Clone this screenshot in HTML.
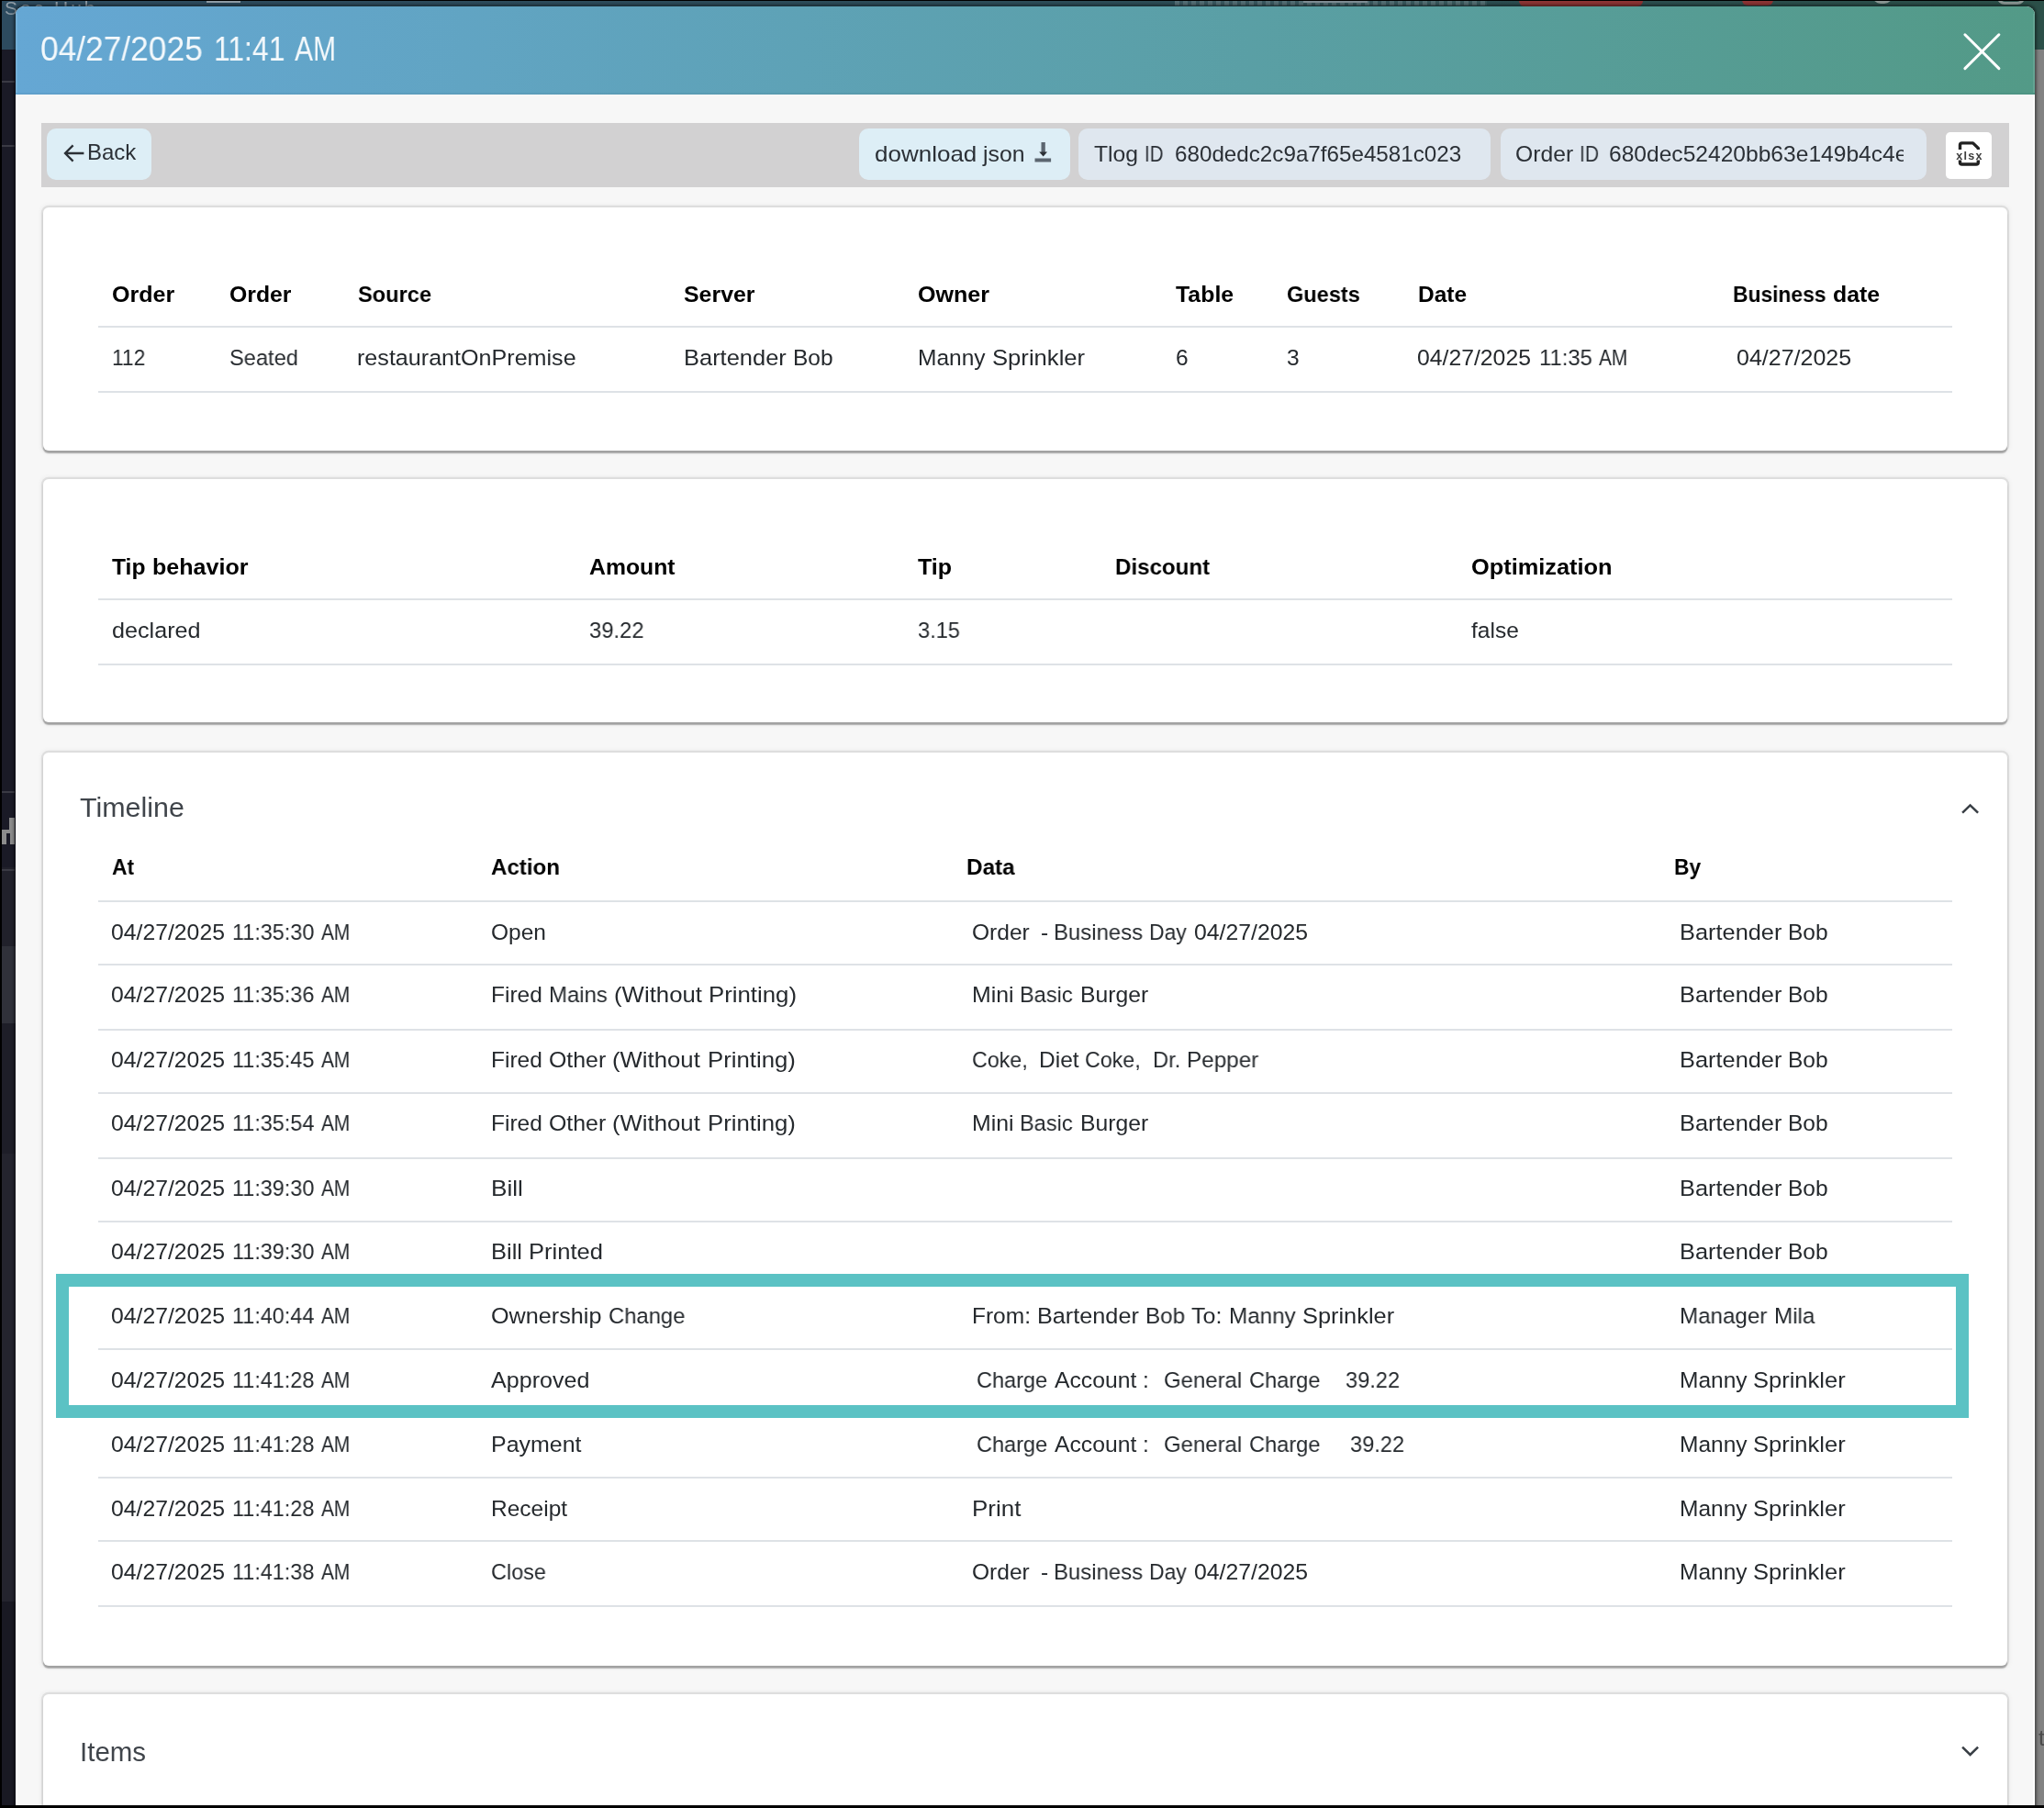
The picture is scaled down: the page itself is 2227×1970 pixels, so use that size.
<!DOCTYPE html>
<html><head><meta charset="utf-8"><title>Order timeline</title>
<style>
html,body{margin:0;padding:0;}
html,body{width:2227px;height:1970px;overflow:hidden;}
body{position:relative;background:#828282;font-family:"Liberation Sans",sans-serif;}
#root{position:absolute;left:0;top:0;width:2227px;height:1970px;overflow:hidden;background:#828282;}
.b{position:absolute;display:block;}
.t{position:absolute;display:block;white-space:pre;line-height:40px;height:40px;will-change:transform;transform-origin:0 50%;}
svg.b{will-change:transform;}
</style></head><body><div id="root">
<div class="b" style="left:0.00px;top:0.00px;width:2227.00px;height:54.00px;background:linear-gradient(90deg,#2d4b5f 0%,#2c4c58 50%,#2b4f48 100%);"></div>
<div class="b" style="left:0.00px;top:54.00px;width:20.00px;height:891.00px;background:#1a1a26;"></div>
<div class="b" style="left:0.00px;top:945.00px;width:20.00px;height:86.00px;background:#21212b;"></div>
<div class="b" style="left:0.00px;top:1031.00px;width:20.00px;height:84.00px;background:#30313a;"></div>
<div class="b" style="left:0.00px;top:1115.00px;width:20.00px;height:142.00px;background:#1e1e28;"></div>
<div class="b" style="left:0.00px;top:1257.00px;width:20.00px;height:488.00px;background:#24242e;"></div>
<div class="b" style="left:0.00px;top:1745.00px;width:20.00px;height:225.00px;background:#191923;"></div>
<div class="b" style="left:2.00px;top:88.00px;width:14.00px;height:1.50px;background:#3a3a44;"></div>
<div class="b" style="left:2.00px;top:158.00px;width:14.00px;height:1.50px;background:#3a3a44;"></div>
<div class="b" style="left:2.00px;top:862.00px;width:14.00px;height:1.50px;background:#3a3a44;"></div>
<div class="b" style="left:2.00px;top:947.00px;width:14.00px;height:1.50px;background:#3a3a44;"></div>
<div class="b" style="left:10.00px;top:891.00px;width:6.00px;height:13.00px;background:#8c8c8c;"></div>
<div class="b" style="left:2.00px;top:904.00px;width:14.00px;height:4.00px;background:#8c8c8c;"></div>
<div class="b" style="left:2.00px;top:908.00px;width:5.00px;height:12.00px;background:#8c8c8c;"></div>
<div class="b" style="left:11.00px;top:908.00px;width:5.00px;height:12.00px;background:#8c8c8c;"></div>
<span class="t" style="left:4.5px;top:-11.5px;font-size:21px;color:#8e9ba5;letter-spacing:3px;">Sec Hub</span>
<div class="b" style="left:1655.00px;top:-6.00px;width:135.00px;height:12.50px;background:#8c3434;border-radius:6px;"></div>
<div class="b" style="left:1898.00px;top:-6.00px;width:34.00px;height:12.00px;background:#8c3434;border-radius:6px;"></div>
<div class="b" style="left:1280.00px;top:1.00px;width:340.00px;height:4.50px;background:repeating-linear-gradient(90deg,rgba(150,165,170,.38) 0 5px,rgba(150,165,170,.12) 5px 9px);"></div>
<div class="b" style="left:1420.00px;top:1.00px;width:70.00px;height:2.00px;background:#7e8c93;"></div>
<div class="b" style="left:225.00px;top:1.00px;width:37.00px;height:1.60px;background:#8e9ba5;"></div>
<div class="b" style="left:2040px;top:-14px;width:22px;height:18px;border:3px solid #8a9693;border-radius:11px;box-sizing:border-box"></div>
<div class="b" style="left:2176px;top:-14px;width:30px;height:19px;border:3px solid #8a9693;border-radius:8px;box-sizing:border-box"></div>
<div class="b" style="left:2210.00px;top:54.00px;width:17.00px;height:1916.00px;background:#828282;"></div>
<div class="b" style="left:0.00px;top:0.00px;width:2.00px;height:1970.00px;background:#000;"></div>
<div class="b" style="left:0.00px;top:0.00px;width:2227.00px;height:1.00px;background:#000;"></div>
<div class="b" style="left:16.50px;top:6.80px;width:2200.60px;height:1983.20px;background:#f7f7f7;border-radius:9px;box-shadow:0 0 3px 1.5px rgba(0,0,0,.42);"></div>
<div class="b" style="left:16.50px;top:6.80px;width:2200.60px;height:96.50px;background:linear-gradient(90deg,#65a7d4 0%,#539a87 100%);border-radius:9px 9px 0 0;"></div>
<span class="t" style="left:44.20px;top:34.00px;font-size:36px;font-weight:400;color:rgba(255,255,255,.93);transform:scaleX(0.9809);">04/27/2025</span>
<span class="t" style="left:232.50px;top:34.00px;font-size:36px;font-weight:400;color:rgba(255,255,255,.93);transform:scaleX(0.8857);">11:41</span>
<span class="t" style="left:320.50px;top:34.00px;font-size:36px;font-weight:400;color:rgba(255,255,255,.93);transform:scaleX(0.8352);">AM</span>
<div class="b" style="left:16.50px;top:103.00px;width:2.30px;height:1887.00px;background:#fff;"></div>
<div class="b" style="left:2214.80px;top:103.00px;width:2.30px;height:1887.00px;background:#fff;"></div>
<div class="b" style="left:16.50px;top:14.80px;width:2.30px;height:86.20px;background:rgba(255,255,255,.10);"></div>
<div class="b" style="left:2214.80px;top:14.80px;width:2.30px;height:86.20px;background:rgba(255,255,255,.10);"></div>
<div class="b" style="left:16.50px;top:101.30px;width:2200.60px;height:2.00px;background:rgba(0,40,60,.05);"></div>
<svg class="b" style="left:2138px;top:35px" width="43" height="43" viewBox="0 0 43 43"><path d="M2.9 2.8 L39.9 39.6 M39.9 2.8 L2.9 39.6" stroke="#fff" stroke-width="3" stroke-linecap="round" fill="none"/></svg>
<div class="b" style="left:44.50px;top:134.00px;width:2144.50px;height:70.00px;background:#d2d1d2;"></div>
<div class="b" style="left:51.00px;top:140.00px;width:114.00px;height:55.50px;background:#ddeef6;border-radius:10px;"></div>
<div class="b" style="left:936.00px;top:140.00px;width:230.00px;height:55.50px;background:#ddeef6;border-radius:10px;"></div>
<div class="b" style="left:1174.50px;top:140.00px;width:449.50px;height:55.50px;background:#dfe7ef;border-radius:10px;"></div>
<div class="b" style="left:1635.00px;top:140.00px;width:463.50px;height:55.50px;background:#dfe7ef;border-radius:10px;"></div>
<div class="b" style="left:2120.30px;top:143.80px;width:49.70px;height:51.10px;background:#fff;border-radius:5px;"></div>
<svg class="b" style="left:67px;top:155px" width="28" height="24" viewBox="0 0 28 24"><path d="M24.4 12 H4.6 M12.6 3.4 L4 12 L12.6 20.6" stroke="#2b3036" stroke-width="2.3" fill="none" stroke-linecap="butt" stroke-linejoin="miter"/></svg>
<span class="t" style="left:95.20px;top:145.60px;font-size:24px;font-weight:400;color:#2b3036;transform:scaleX(0.9981);">Back</span>
<span class="t" style="left:952.50px;top:147.80px;font-size:24px;font-weight:400;color:#2b3036;transform:scaleX(1.0832);">download</span>
<span class="t" style="left:1070.77px;top:147.80px;font-size:24px;font-weight:400;color:#2b3036;transform:scaleX(1.0324);">json</span>
<svg class="b" style="left:1120px;top:150px" width="32" height="32" viewBox="0 0 32 32"><rect x="14.5" y="5" width="4.3" height="12" fill="#5c6670"/><polygon points="12.2,15.5 21.1,15.5 16.65,20.4" fill="#2b3035"/><rect x="7.5" y="22.5" width="17.6" height="4" fill="#5c6670"/></svg>
<span class="t" style="left:1191.70px;top:147.80px;font-size:24px;font-weight:400;color:#2b3036;transform:scaleX(1.0289);">Tlog</span>
<span class="t" style="left:1247.40px;top:147.80px;font-size:24px;font-weight:400;color:#2b3036;transform:scaleX(0.8500);">ID</span>
<span class="t" style="left:1279.90px;top:147.80px;font-size:24px;font-weight:400;color:#2b3036;transform:scaleX(1.0084);">680dedc2c9a7f65e4581c023</span>
<span class="t" style="left:1651.00px;top:147.80px;font-size:24px;font-weight:400;color:#2b3036;transform:scaleX(1.0286);">Order</span>
<span class="t" style="left:1721.00px;top:147.80px;font-size:24px;font-weight:400;color:#2b3036;transform:scaleX(0.8750);">ID</span>
<div class="b" style="left:1745px;top:140px;width:329.3px;height:55px;overflow:hidden">
<span class="t" style="left:7.80px;top:7.80px;font-size:24px;font-weight:400;color:#2b3036;transform:scaleX(1.0244);">680dec52420bb63e149b4c4e</span>
</div>
<svg class="b" style="left:2125px;top:148px" width="42" height="40" viewBox="0 0 42 40"><path d="M10.5 15 V10 Q10.5 7.9 12.6 7.9 H24.6 L30.3 13.4 V15" stroke="#222" stroke-width="3.4" fill="none" stroke-linejoin="round"/><path d="M10.5 26.6 V28.9 Q10.5 31 12.6 31 H28.2 Q30.3 31 30.3 28.9 V26.6" stroke="#222" stroke-width="3.4" fill="none"/><text x="20.9" y="25.7" font-family="Liberation Sans, sans-serif" font-weight="700" font-size="12.6" text-anchor="middle" fill="#3c3c3c" letter-spacing="1.25">xlsx</text></svg>
<div class="b" style="left:46.80px;top:226.00px;width:2139.90px;height:264.50px;background:#fff;border-radius:6px;box-shadow:0 2.9px 1.3px -0.3px rgba(0,0,0,.27),0 0 0 2.2px rgba(0,0,0,.075),0 0 5px 2.5px rgba(0,0,0,.04);"></div>
<span class="t" style="left:121.75px;top:300.80px;font-size:24.5px;font-weight:700;color:#000;transform:scaleX(1.0225);">Order</span>
<span class="t" style="left:250.00px;top:300.80px;font-size:24.5px;font-weight:700;color:#000;transform:scaleX(1.0112);">Order</span>
<span class="t" style="left:389.50px;top:300.80px;font-size:24.5px;font-weight:700;color:#000;transform:scaleX(0.9639);">Source</span>
<span class="t" style="left:745.00px;top:300.80px;font-size:24.5px;font-weight:700;color:#000;transform:scaleX(1.0164);">Server</span>
<span class="t" style="left:1000.00px;top:300.80px;font-size:24.5px;font-weight:700;color:#000;transform:scaleX(1.0230);">Owner</span>
<span class="t" style="left:1280.50px;top:300.80px;font-size:24.5px;font-weight:700;color:#000;transform:scaleX(1.0161);">Table</span>
<span class="t" style="left:1402.00px;top:300.80px;font-size:24.5px;font-weight:700;color:#000;transform:scaleX(0.9602);">Guests</span>
<span class="t" style="left:1545.00px;top:300.80px;font-size:24.5px;font-weight:700;color:#000;transform:scaleX(1.0000);">Date</span>
<span class="t" style="left:1888.00px;top:300.80px;font-size:24.5px;font-weight:700;color:#000;transform:scaleX(0.9318);">Business</span>
<span class="t" style="left:1997.20px;top:300.80px;font-size:24.5px;font-weight:700;color:#000;transform:scaleX(1.0159);">date</span>
<div class="b" style="left:107.00px;top:355.00px;width:2020.00px;height:2.00px;background:#dee2e6;"></div>
<span class="t" style="left:121.75px;top:369.50px;font-size:24.5px;font-weight:400;color:#25292d;transform:scaleX(0.9295);">112</span>
<span class="t" style="left:250.00px;top:369.50px;font-size:24.5px;font-weight:400;color:#25292d;transform:scaleX(0.9646);">Seated</span>
<span class="t" style="left:389.00px;top:369.50px;font-size:24.5px;font-weight:400;color:#25292d;transform:scaleX(1.0247);">restaurantOnPremise</span>
<span class="t" style="left:745.00px;top:369.50px;font-size:24.5px;font-weight:400;color:#25292d;transform:scaleX(1.0393);">Bartender</span>
<span class="t" style="left:864.12px;top:369.50px;font-size:24.5px;font-weight:400;color:#25292d;transform:scaleX(0.9972);">Bob</span>
<span class="t" style="left:1000.00px;top:369.50px;font-size:24.5px;font-weight:400;color:#25292d;transform:scaleX(0.9985);">Manny</span>
<span class="t" style="left:1080.79px;top:369.50px;font-size:24.5px;font-weight:400;color:#25292d;transform:scaleX(1.0461);">Sprinkler</span>
<span class="t" style="left:1280.50px;top:369.50px;font-size:24.5px;font-weight:400;color:#25292d;transform:scaleX(1.0000);">6</span>
<span class="t" style="left:1402.00px;top:369.50px;font-size:24.5px;font-weight:400;color:#25292d;transform:scaleX(1.0000);">3</span>
<span class="t" style="left:1544.40px;top:369.50px;font-size:24.5px;font-weight:400;color:#25292d;transform:scaleX(1.0106);">04/27/2025</span>
<span class="t" style="left:1676.70px;top:369.50px;font-size:24.5px;font-weight:400;color:#25292d;transform:scaleX(0.9731);">11:35</span>
<span class="t" style="left:1741.70px;top:369.50px;font-size:24.5px;font-weight:400;color:#25292d;transform:scaleX(0.8517);">AM</span>
<span class="t" style="left:1892.00px;top:369.50px;font-size:24.5px;font-weight:400;color:#25292d;transform:scaleX(1.0204);">04/27/2025</span>
<div class="b" style="left:107.00px;top:425.50px;width:2020.00px;height:2.00px;background:#dee2e6;"></div>
<div class="b" style="left:46.80px;top:522.30px;width:2139.90px;height:264.60px;background:#fff;border-radius:6px;box-shadow:0 2.9px 1.3px -0.3px rgba(0,0,0,.27),0 0 0 2.2px rgba(0,0,0,.075),0 0 5px 2.5px rgba(0,0,0,.04);"></div>
<span class="t" style="left:121.50px;top:597.90px;font-size:24.5px;font-weight:700;color:#000;transform:scaleX(1.0050);">Tip</span>
<span class="t" style="left:165.68px;top:597.90px;font-size:24.5px;font-weight:700;color:#000;transform:scaleX(1.0228);">behavior</span>
<span class="t" style="left:641.50px;top:597.90px;font-size:24.5px;font-weight:700;color:#000;transform:scaleX(1.0108);">Amount</span>
<span class="t" style="left:1000.00px;top:597.90px;font-size:24.5px;font-weight:700;color:#000;transform:scaleX(1.0207);">Tip</span>
<span class="t" style="left:1215.00px;top:597.90px;font-size:24.5px;font-weight:700;color:#000;transform:scaleX(0.9833);">Discount</span>
<span class="t" style="left:1602.60px;top:597.90px;font-size:24.5px;font-weight:700;color:#000;transform:scaleX(1.0347);">Optimization</span>
<div class="b" style="left:107.00px;top:652.00px;width:2020.00px;height:2.00px;background:#dee2e6;"></div>
<span class="t" style="left:121.50px;top:666.50px;font-size:24.5px;font-weight:400;color:#25292d;transform:scaleX(1.0266);">declared</span>
<span class="t" style="left:641.50px;top:666.50px;font-size:24.5px;font-weight:400;color:#25292d;transform:scaleX(0.9714);">39.22</span>
<span class="t" style="left:1000.00px;top:666.50px;font-size:24.5px;font-weight:400;color:#25292d;transform:scaleX(0.9634);">3.15</span>
<span class="t" style="left:1602.60px;top:666.50px;font-size:24.5px;font-weight:400;color:#25292d;transform:scaleX(0.9932);">false</span>
<div class="b" style="left:107.00px;top:722.50px;width:2020.00px;height:2.00px;background:#dee2e6;"></div>
<div class="b" style="left:46.80px;top:819.80px;width:2139.90px;height:995.00px;background:#fff;border-radius:6px;box-shadow:0 2.9px 1.3px -0.3px rgba(0,0,0,.27),0 0 0 2.2px rgba(0,0,0,.075),0 0 5px 2.5px rgba(0,0,0,.04);"></div>
<span class="t" style="left:87.00px;top:860.30px;font-size:29.5px;font-weight:400;color:#40454b;transform:scaleX(1.0317);">Timeline</span>
<svg class="b" style="left:2133px;top:872px" width="27" height="18" viewBox="0 0 27 18"><path d="M5.1 13.7 L13.6 5.4 L22.1 13.7" stroke="#383e44" stroke-width="2.5" fill="none"/></svg>
<span class="t" style="left:121.50px;top:924.50px;font-size:24.5px;font-weight:700;color:#000;transform:scaleX(0.9320);">At</span>
<span class="t" style="left:535.00px;top:924.50px;font-size:24.5px;font-weight:700;color:#000;transform:scaleX(0.9836);">Action</span>
<span class="t" style="left:1053.00px;top:924.50px;font-size:24.5px;font-weight:700;color:#000;transform:scaleX(0.9907);">Data</span>
<span class="t" style="left:1824.00px;top:924.50px;font-size:24.5px;font-weight:700;color:#000;transform:scaleX(0.9280);">By</span>
<div class="b" style="left:107.00px;top:981.20px;width:2020.00px;height:2.00px;background:#dee2e6;"></div>
<span class="t" style="left:121.00px;top:995.70px;font-size:24.5px;font-weight:400;color:#25292d;transform:scaleX(1.0106);">04/27/2025</span>
<span class="t" style="left:253.30px;top:995.70px;font-size:24.5px;font-weight:400;color:#25292d;transform:scaleX(0.9551);">11:35:30</span>
<span class="t" style="left:349.70px;top:995.70px;font-size:24.5px;font-weight:400;color:#25292d;transform:scaleX(0.8517);">AM</span>
<span class="t" style="left:535.00px;top:995.70px;font-size:24.5px;font-weight:400;color:#25292d;transform:scaleX(1.0000);">Open</span>
<span class="t" style="left:1058.50px;top:995.70px;font-size:24.5px;font-weight:400;color:#25292d;transform:scaleX(1.0026);">Order</span>
<span class="t" style="left:1134.19px;top:995.70px;font-size:24.5px;font-weight:400;color:#25292d;transform:scaleX(1.0000);">-</span>
<span class="t" style="left:1147.97px;top:995.70px;font-size:24.5px;font-weight:400;color:#25292d;transform:scaleX(0.9760);">Business</span>
<span class="t" style="left:1252.47px;top:995.70px;font-size:24.5px;font-weight:400;color:#25292d;transform:scaleX(0.9365);">Day</span>
<span class="t" style="left:1300.59px;top:995.70px;font-size:24.5px;font-weight:400;color:#25292d;transform:scaleX(1.0123);">04/27/2025</span>
<span class="t" style="left:1829.80px;top:995.70px;font-size:24.5px;font-weight:400;color:#25292d;transform:scaleX(1.0355);">Bartender</span>
<span class="t" style="left:1948.49px;top:995.70px;font-size:24.5px;font-weight:400;color:#25292d;transform:scaleX(0.9934);">Bob</span>
<div class="b" style="left:107.00px;top:1049.90px;width:2020.00px;height:2.00px;background:#dee2e6;"></div>
<span class="t" style="left:121.00px;top:1064.40px;font-size:24.5px;font-weight:400;color:#25292d;transform:scaleX(1.0106);">04/27/2025</span>
<span class="t" style="left:253.30px;top:1064.40px;font-size:24.5px;font-weight:400;color:#25292d;transform:scaleX(0.9551);">11:35:36</span>
<span class="t" style="left:349.70px;top:1064.40px;font-size:24.5px;font-weight:400;color:#25292d;transform:scaleX(0.8517);">AM</span>
<span class="t" style="left:535.00px;top:1064.40px;font-size:24.5px;font-weight:400;color:#25292d;transform:scaleX(0.9962);">Fired</span>
<span class="t" style="left:597.92px;top:1064.40px;font-size:24.5px;font-weight:400;color:#25292d;transform:scaleX(0.9770);">Mains</span>
<span class="t" style="left:669.05px;top:1064.40px;font-size:24.5px;font-weight:400;color:#25292d;transform:scaleX(1.0520);">(Without</span>
<span class="t" style="left:772.43px;top:1064.40px;font-size:24.5px;font-weight:400;color:#25292d;transform:scaleX(1.0528);">Printing)</span>
<span class="t" style="left:1058.50px;top:1064.40px;font-size:24.5px;font-weight:400;color:#25292d;transform:scaleX(1.0133);">Mini</span>
<span class="t" style="left:1111.49px;top:1064.40px;font-size:24.5px;font-weight:400;color:#25292d;transform:scaleX(0.9608);">Basic</span>
<span class="t" style="left:1176.53px;top:1064.40px;font-size:24.5px;font-weight:400;color:#25292d;transform:scaleX(1.0091);">Burger</span>
<span class="t" style="left:1829.80px;top:1064.40px;font-size:24.5px;font-weight:400;color:#25292d;transform:scaleX(1.0355);">Bartender</span>
<span class="t" style="left:1948.49px;top:1064.40px;font-size:24.5px;font-weight:400;color:#25292d;transform:scaleX(0.9934);">Bob</span>
<div class="b" style="left:107.00px;top:1120.80px;width:2020.00px;height:2.00px;background:#dee2e6;"></div>
<span class="t" style="left:121.00px;top:1135.30px;font-size:24.5px;font-weight:400;color:#25292d;transform:scaleX(1.0106);">04/27/2025</span>
<span class="t" style="left:253.30px;top:1135.30px;font-size:24.5px;font-weight:400;color:#25292d;transform:scaleX(0.9551);">11:35:45</span>
<span class="t" style="left:349.70px;top:1135.30px;font-size:24.5px;font-weight:400;color:#25292d;transform:scaleX(0.8517);">AM</span>
<span class="t" style="left:535.00px;top:1135.30px;font-size:24.5px;font-weight:400;color:#25292d;transform:scaleX(0.9946);">Fired</span>
<span class="t" style="left:597.82px;top:1135.30px;font-size:24.5px;font-weight:400;color:#25292d;transform:scaleX(1.0154);">Other</span>
<span class="t" style="left:667.38px;top:1135.30px;font-size:24.5px;font-weight:400;color:#25292d;transform:scaleX(1.0502);">(Without</span>
<span class="t" style="left:770.59px;top:1135.30px;font-size:24.5px;font-weight:400;color:#25292d;transform:scaleX(1.0511);">Printing)</span>
<span class="t" style="left:1058.50px;top:1135.30px;font-size:24.5px;font-weight:400;color:#25292d;transform:scaleX(0.9483);">Coke,</span>
<span class="t" style="left:1131.85px;top:1135.30px;font-size:24.5px;font-weight:400;color:#25292d;transform:scaleX(0.9922);">Diet</span>
<span class="t" style="left:1182.33px;top:1135.30px;font-size:24.5px;font-weight:400;color:#25292d;transform:scaleX(0.9483);">Coke,</span>
<span class="t" style="left:1255.68px;top:1135.30px;font-size:24.5px;font-weight:400;color:#25292d;transform:scaleX(0.9684);">Dr.</span>
<span class="t" style="left:1293.27px;top:1135.30px;font-size:24.5px;font-weight:400;color:#25292d;transform:scaleX(0.9915);">Pepper</span>
<span class="t" style="left:1829.80px;top:1135.30px;font-size:24.5px;font-weight:400;color:#25292d;transform:scaleX(1.0355);">Bartender</span>
<span class="t" style="left:1948.49px;top:1135.30px;font-size:24.5px;font-weight:400;color:#25292d;transform:scaleX(0.9934);">Bob</span>
<div class="b" style="left:107.00px;top:1189.60px;width:2020.00px;height:2.00px;background:#dee2e6;"></div>
<span class="t" style="left:121.00px;top:1204.10px;font-size:24.5px;font-weight:400;color:#25292d;transform:scaleX(1.0106);">04/27/2025</span>
<span class="t" style="left:253.30px;top:1204.10px;font-size:24.5px;font-weight:400;color:#25292d;transform:scaleX(0.9551);">11:35:54</span>
<span class="t" style="left:349.70px;top:1204.10px;font-size:24.5px;font-weight:400;color:#25292d;transform:scaleX(0.8517);">AM</span>
<span class="t" style="left:535.00px;top:1204.10px;font-size:24.5px;font-weight:400;color:#25292d;transform:scaleX(0.9946);">Fired</span>
<span class="t" style="left:597.82px;top:1204.10px;font-size:24.5px;font-weight:400;color:#25292d;transform:scaleX(1.0154);">Other</span>
<span class="t" style="left:667.38px;top:1204.10px;font-size:24.5px;font-weight:400;color:#25292d;transform:scaleX(1.0502);">(Without</span>
<span class="t" style="left:770.59px;top:1204.10px;font-size:24.5px;font-weight:400;color:#25292d;transform:scaleX(1.0511);">Printing)</span>
<span class="t" style="left:1058.50px;top:1204.10px;font-size:24.5px;font-weight:400;color:#25292d;transform:scaleX(1.0133);">Mini</span>
<span class="t" style="left:1111.49px;top:1204.10px;font-size:24.5px;font-weight:400;color:#25292d;transform:scaleX(0.9608);">Basic</span>
<span class="t" style="left:1176.53px;top:1204.10px;font-size:24.5px;font-weight:400;color:#25292d;transform:scaleX(1.0091);">Burger</span>
<span class="t" style="left:1829.80px;top:1204.10px;font-size:24.5px;font-weight:400;color:#25292d;transform:scaleX(1.0355);">Bartender</span>
<span class="t" style="left:1948.49px;top:1204.10px;font-size:24.5px;font-weight:400;color:#25292d;transform:scaleX(0.9934);">Bob</span>
<div class="b" style="left:107.00px;top:1260.60px;width:2020.00px;height:2.00px;background:#dee2e6;"></div>
<span class="t" style="left:121.00px;top:1275.10px;font-size:24.5px;font-weight:400;color:#25292d;transform:scaleX(1.0106);">04/27/2025</span>
<span class="t" style="left:253.30px;top:1275.10px;font-size:24.5px;font-weight:400;color:#25292d;transform:scaleX(0.9551);">11:39:30</span>
<span class="t" style="left:349.70px;top:1275.10px;font-size:24.5px;font-weight:400;color:#25292d;transform:scaleX(0.8517);">AM</span>
<span class="t" style="left:535.00px;top:1275.10px;font-size:24.5px;font-weight:400;color:#25292d;transform:scaleX(1.0687);">Bill</span>
<span class="t" style="left:1829.80px;top:1275.10px;font-size:24.5px;font-weight:400;color:#25292d;transform:scaleX(1.0355);">Bartender</span>
<span class="t" style="left:1948.49px;top:1275.10px;font-size:24.5px;font-weight:400;color:#25292d;transform:scaleX(0.9934);">Bob</span>
<div class="b" style="left:107.00px;top:1329.60px;width:2020.00px;height:2.00px;background:#dee2e6;"></div>
<span class="t" style="left:121.00px;top:1344.10px;font-size:24.5px;font-weight:400;color:#25292d;transform:scaleX(1.0106);">04/27/2025</span>
<span class="t" style="left:253.30px;top:1344.10px;font-size:24.5px;font-weight:400;color:#25292d;transform:scaleX(0.9551);">11:39:30</span>
<span class="t" style="left:349.70px;top:1344.10px;font-size:24.5px;font-weight:400;color:#25292d;transform:scaleX(0.8517);">AM</span>
<span class="t" style="left:535.00px;top:1344.10px;font-size:24.5px;font-weight:400;color:#25292d;transform:scaleX(1.0403);">Bill</span>
<span class="t" style="left:576.44px;top:1344.10px;font-size:24.5px;font-weight:400;color:#25292d;transform:scaleX(1.0426);">Printed</span>
<span class="t" style="left:1829.80px;top:1344.10px;font-size:24.5px;font-weight:400;color:#25292d;transform:scaleX(1.0355);">Bartender</span>
<span class="t" style="left:1948.49px;top:1344.10px;font-size:24.5px;font-weight:400;color:#25292d;transform:scaleX(0.9934);">Bob</span>
<div class="b" style="left:107.00px;top:1399.30px;width:2020.00px;height:2.00px;background:#dee2e6;"></div>
<span class="t" style="left:121.00px;top:1413.80px;font-size:24.5px;font-weight:400;color:#25292d;transform:scaleX(1.0106);">04/27/2025</span>
<span class="t" style="left:253.30px;top:1413.80px;font-size:24.5px;font-weight:400;color:#25292d;transform:scaleX(0.9551);">11:40:44</span>
<span class="t" style="left:349.70px;top:1413.80px;font-size:24.5px;font-weight:400;color:#25292d;transform:scaleX(0.8517);">AM</span>
<span class="t" style="left:535.00px;top:1413.80px;font-size:24.5px;font-weight:400;color:#25292d;transform:scaleX(1.0280);">Ownership</span>
<span class="t" style="left:662.67px;top:1413.80px;font-size:24.5px;font-weight:400;color:#25292d;transform:scaleX(0.9718);">Change</span>
<span class="t" style="left:1058.50px;top:1413.80px;font-size:24.5px;font-weight:400;color:#25292d;transform:scaleX(0.9966);">From:</span>
<span class="t" style="left:1129.63px;top:1413.80px;font-size:24.5px;font-weight:400;color:#25292d;transform:scaleX(1.0302);">Bartender</span>
<span class="t" style="left:1247.72px;top:1413.80px;font-size:24.5px;font-weight:400;color:#25292d;transform:scaleX(0.9882);">Bob</span>
<span class="t" style="left:1298.05px;top:1413.80px;font-size:24.5px;font-weight:400;color:#25292d;transform:scaleX(1.0220);">To:</span>
<span class="t" style="left:1338.87px;top:1413.80px;font-size:24.5px;font-weight:400;color:#25292d;transform:scaleX(0.9881);">Manny</span>
<span class="t" style="left:1418.84px;top:1413.80px;font-size:24.5px;font-weight:400;color:#25292d;transform:scaleX(1.0352);">Sprinkler</span>
<span class="t" style="left:1829.80px;top:1413.80px;font-size:24.5px;font-weight:400;color:#25292d;transform:scaleX(0.9857);">Manager</span>
<span class="t" style="left:1932.53px;top:1413.80px;font-size:24.5px;font-weight:400;color:#25292d;transform:scaleX(0.9882);">Mila</span>
<div class="b" style="left:107.00px;top:1469.30px;width:2020.00px;height:2.00px;background:#dee2e6;"></div>
<span class="t" style="left:121.00px;top:1483.80px;font-size:24.5px;font-weight:400;color:#25292d;transform:scaleX(1.0106);">04/27/2025</span>
<span class="t" style="left:253.30px;top:1483.80px;font-size:24.5px;font-weight:400;color:#25292d;transform:scaleX(0.9551);">11:41:28</span>
<span class="t" style="left:349.70px;top:1483.80px;font-size:24.5px;font-weight:400;color:#25292d;transform:scaleX(0.8517);">AM</span>
<span class="t" style="left:535.00px;top:1483.80px;font-size:24.5px;font-weight:400;color:#25292d;transform:scaleX(1.0238);">Approved</span>
<span class="t" style="left:1064.40px;top:1483.80px;font-size:24.5px;font-weight:400;color:#25292d;transform:scaleX(0.9597);">Charge</span>
<span class="t" style="left:1148.74px;top:1483.80px;font-size:24.5px;font-weight:400;color:#25292d;transform:scaleX(1.0090);">Account</span>
<span class="t" style="left:1245.37px;top:1483.80px;font-size:24.5px;font-weight:400;color:#25292d;transform:scaleX(1.0000);">:</span>
<span class="t" style="left:1268.00px;top:1483.80px;font-size:24.5px;font-weight:400;color:#25292d;transform:scaleX(0.9775);">General</span>
<span class="t" style="left:1360.64px;top:1483.80px;font-size:24.5px;font-weight:400;color:#25292d;transform:scaleX(0.9640);">Charge</span>
<span class="t" style="left:1466.00px;top:1483.80px;font-size:24.5px;font-weight:400;color:#25292d;transform:scaleX(0.9633);">39.22</span>
<span class="t" style="left:1829.80px;top:1483.80px;font-size:24.5px;font-weight:400;color:#25292d;transform:scaleX(0.9941);">Manny</span>
<span class="t" style="left:1910.24px;top:1483.80px;font-size:24.5px;font-weight:400;color:#25292d;transform:scaleX(1.0414);">Sprinkler</span>
<div class="b" style="left:107.00px;top:1539.90px;width:2020.00px;height:2.00px;background:#dee2e6;"></div>
<span class="t" style="left:121.00px;top:1554.40px;font-size:24.5px;font-weight:400;color:#25292d;transform:scaleX(1.0106);">04/27/2025</span>
<span class="t" style="left:253.30px;top:1554.40px;font-size:24.5px;font-weight:400;color:#25292d;transform:scaleX(0.9551);">11:41:28</span>
<span class="t" style="left:349.70px;top:1554.40px;font-size:24.5px;font-weight:400;color:#25292d;transform:scaleX(0.8517);">AM</span>
<span class="t" style="left:535.00px;top:1554.40px;font-size:24.5px;font-weight:400;color:#25292d;transform:scaleX(1.0181);">Payment</span>
<span class="t" style="left:1064.40px;top:1554.40px;font-size:24.5px;font-weight:400;color:#25292d;transform:scaleX(0.9597);">Charge</span>
<span class="t" style="left:1148.74px;top:1554.40px;font-size:24.5px;font-weight:400;color:#25292d;transform:scaleX(1.0090);">Account</span>
<span class="t" style="left:1245.37px;top:1554.40px;font-size:24.5px;font-weight:400;color:#25292d;transform:scaleX(1.0000);">:</span>
<span class="t" style="left:1268.00px;top:1554.40px;font-size:24.5px;font-weight:400;color:#25292d;transform:scaleX(0.9775);">General</span>
<span class="t" style="left:1360.64px;top:1554.40px;font-size:24.5px;font-weight:400;color:#25292d;transform:scaleX(0.9640);">Charge</span>
<span class="t" style="left:1471.00px;top:1554.40px;font-size:24.5px;font-weight:400;color:#25292d;transform:scaleX(0.9633);">39.22</span>
<span class="t" style="left:1829.80px;top:1554.40px;font-size:24.5px;font-weight:400;color:#25292d;transform:scaleX(0.9941);">Manny</span>
<span class="t" style="left:1910.24px;top:1554.40px;font-size:24.5px;font-weight:400;color:#25292d;transform:scaleX(1.0414);">Sprinkler</span>
<div class="b" style="left:107.00px;top:1609.00px;width:2020.00px;height:2.00px;background:#dee2e6;"></div>
<span class="t" style="left:121.00px;top:1623.50px;font-size:24.5px;font-weight:400;color:#25292d;transform:scaleX(1.0106);">04/27/2025</span>
<span class="t" style="left:253.30px;top:1623.50px;font-size:24.5px;font-weight:400;color:#25292d;transform:scaleX(0.9551);">11:41:28</span>
<span class="t" style="left:349.70px;top:1623.50px;font-size:24.5px;font-weight:400;color:#25292d;transform:scaleX(0.8517);">AM</span>
<span class="t" style="left:535.00px;top:1623.50px;font-size:24.5px;font-weight:400;color:#25292d;transform:scaleX(1.0000);">Receipt</span>
<span class="t" style="left:1058.50px;top:1623.50px;font-size:24.5px;font-weight:400;color:#25292d;transform:scaleX(1.0594);">Print</span>
<span class="t" style="left:1829.80px;top:1623.50px;font-size:24.5px;font-weight:400;color:#25292d;transform:scaleX(0.9941);">Manny</span>
<span class="t" style="left:1910.24px;top:1623.50px;font-size:24.5px;font-weight:400;color:#25292d;transform:scaleX(1.0414);">Sprinkler</span>
<div class="b" style="left:107.00px;top:1678.20px;width:2020.00px;height:2.00px;background:#dee2e6;"></div>
<span class="t" style="left:121.00px;top:1692.70px;font-size:24.5px;font-weight:400;color:#25292d;transform:scaleX(1.0106);">04/27/2025</span>
<span class="t" style="left:253.30px;top:1692.70px;font-size:24.5px;font-weight:400;color:#25292d;transform:scaleX(0.9551);">11:41:38</span>
<span class="t" style="left:349.70px;top:1692.70px;font-size:24.5px;font-weight:400;color:#25292d;transform:scaleX(0.8517);">AM</span>
<span class="t" style="left:535.00px;top:1692.70px;font-size:24.5px;font-weight:400;color:#25292d;transform:scaleX(0.9562);">Close</span>
<span class="t" style="left:1058.50px;top:1692.70px;font-size:24.5px;font-weight:400;color:#25292d;transform:scaleX(1.0026);">Order</span>
<span class="t" style="left:1134.19px;top:1692.70px;font-size:24.5px;font-weight:400;color:#25292d;transform:scaleX(1.0000);">-</span>
<span class="t" style="left:1147.97px;top:1692.70px;font-size:24.5px;font-weight:400;color:#25292d;transform:scaleX(0.9760);">Business</span>
<span class="t" style="left:1252.47px;top:1692.70px;font-size:24.5px;font-weight:400;color:#25292d;transform:scaleX(0.9365);">Day</span>
<span class="t" style="left:1300.59px;top:1692.70px;font-size:24.5px;font-weight:400;color:#25292d;transform:scaleX(1.0123);">04/27/2025</span>
<span class="t" style="left:1829.80px;top:1692.70px;font-size:24.5px;font-weight:400;color:#25292d;transform:scaleX(0.9941);">Manny</span>
<span class="t" style="left:1910.24px;top:1692.70px;font-size:24.5px;font-weight:400;color:#25292d;transform:scaleX(1.0414);">Sprinkler</span>
<div class="b" style="left:107.00px;top:1749.00px;width:2020.00px;height:2.00px;background:#dee2e6;"></div>
<div class="b" style="left:61.00px;top:1388.00px;width:2084.00px;height:14.00px;background:#5bc2c4;"></div>
<div class="b" style="left:61.00px;top:1531.00px;width:2084.00px;height:14.00px;background:#5bc2c4;"></div>
<div class="b" style="left:61.00px;top:1388.00px;width:14.00px;height:157.00px;background:#5bc2c4;"></div>
<div class="b" style="left:2131.00px;top:1388.00px;width:14.00px;height:157.00px;background:#5bc2c4;"></div>
<div class="b" style="left:46.80px;top:1846.00px;width:2139.90px;height:154.00px;background:#fff;border-radius:6px;box-shadow:0 2.9px 1.3px -0.3px rgba(0,0,0,.27),0 0 0 2.2px rgba(0,0,0,.075),0 0 5px 2.5px rgba(0,0,0,.04);"></div>
<span class="t" style="left:87.30px;top:1889.30px;font-size:29.5px;font-weight:400;color:#40454b;transform:scaleX(0.9958);">Items</span>
<svg class="b" style="left:2133px;top:1899px" width="27" height="18" viewBox="0 0 27 18"><path d="M5.1 4.6 L13.6 12.9 L22.1 4.6" stroke="#383e44" stroke-width="2.5" fill="none"/></svg>
<span class="t" style="left:2220.5px;top:1874px;font-size:24px;color:#4a4a4a;">t</span>
<div class="b" style="left:0.00px;top:1966.80px;width:2227.00px;height:3.20px;background:#000;"></div>
</div></body></html>
